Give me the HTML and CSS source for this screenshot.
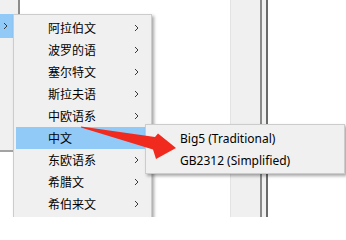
FILE: index.html
```html
<!DOCTYPE html>
<html lang="zh">
<head>
<meta charset="utf-8">
<title>Encoding menu</title>
<link rel="stylesheet" href="styles.css">
</head>
<body>
<div class="screen">
  <div class="bg">
    <div class="left-pane">
      <div class="pane-row active">
        <svg class="chev" viewBox="0 0 5 8" width="5" height="8"><polyline points="1,1 4,4 1,7"/></svg>
      </div>
    </div>
    <div class="pane-divider"></div>
    <div class="content"></div>
    <div class="scroll-track"></div>
    <div class="splitter"></div>
    <div class="content-right"></div>
  </div>

  <div class="menu main-menu">
    <div class="item"><span>阿拉伯文</span><svg class="chev" viewBox="0 0 5 8" width="5" height="8"><polyline points="1,1 4,4 1,7"/></svg></div>
    <div class="item"><span>波罗的语</span><svg class="chev" viewBox="0 0 5 8" width="5" height="8"><polyline points="1,1 4,4 1,7"/></svg></div>
    <div class="item"><span>塞尔特文</span><svg class="chev" viewBox="0 0 5 8" width="5" height="8"><polyline points="1,1 4,4 1,7"/></svg></div>
    <div class="item"><span>斯拉夫语</span><svg class="chev" viewBox="0 0 5 8" width="5" height="8"><polyline points="1,1 4,4 1,7"/></svg></div>
    <div class="item"><span>中欧语系</span><svg class="chev" viewBox="0 0 5 8" width="5" height="8"><polyline points="1,1 4,4 1,7"/></svg></div>
    <div class="item active"><span>中文</span><svg class="chev" viewBox="0 0 5 8" width="5" height="8"><polyline points="1,1 4,4 1,7"/></svg></div>
    <div class="item"><span>东欧语系</span><svg class="chev" viewBox="0 0 5 8" width="5" height="8"><polyline points="1,1 4,4 1,7"/></svg></div>
    <div class="item"><span>希腊文</span><svg class="chev" viewBox="0 0 5 8" width="5" height="8"><polyline points="1,1 4,4 1,7"/></svg></div>
    <div class="item"><span>希伯来文</span><svg class="chev" viewBox="0 0 5 8" width="5" height="8"><polyline points="1,1 4,4 1,7"/></svg></div>
  </div>

  <div class="menu sub-menu">
    <div class="item"><span>Big5 (Traditional)</span></div>
    <div class="item"><span>GB2312 (Simplified)</span></div>
  </div>

  <svg class="pointer-arrow" viewBox="0 0 346 217" width="346" height="217">
    <polygon points="81,126.5 155,137 158,133.5 176,148 156,159 153,149.5 81,127.5"/>
  </svg>
</div>
</body>
</html>
```

FILE: styles.css
```css
html, body {
  margin: 0;
  padding: 0;
  background: #ffffff;
}

.screen {
  position: relative;
  width: 346px;
  height: 217px;
  overflow: hidden;
  font-family: "Noto Sans", "Noto Sans CJK SC", sans-serif;
  font-size: 12px;
  color: #000000;
}

.bg {
  display: flex;
  height: 217px;
}

.left-pane {
  box-sizing: border-box;
  width: 18px;
  height: 152px;
  padding-top: 14px;
  background: #f0f0f0;
  border-bottom: 2px solid #a3a3a3;
  display: flex;
  flex-direction: column;
}

.pane-row {
  height: 24px;
  display: flex;
  align-items: center;
  padding-left: 3px;
}

.pane-row.active {
  background: #91c9f7;
}

.pane-divider {
  width: 2px;
  background: #8c8c8c;
}

.content {
  width: 210px;
  background: #ffffff;
}

.scroll-track {
  box-sizing: border-box;
  width: 30px;
  background: #f0f0f0;
  border-left: 1px solid #e3e3e3;
}

.splitter {
  box-sizing: border-box;
  width: 8px;
  background: #f0f0f0;
  border-left: 2px solid #8a8a8a;
  border-right: 2px solid #6a6a6a;
}

.content-right {
  flex: 1;
  background: #ffffff;
}

.chev {
  display: block;
  flex: none;
}

.chev polyline {
  fill: none;
  stroke: #3a3a3a;
  stroke-width: 1;
}

.menu {
  position: absolute;
  box-sizing: border-box;
  background: #f0f0f0;
  border: 1px solid #cccccc;
  padding: 2px;
  box-shadow: 2px 2px 3px rgba(0, 0, 0, 0.35);
  display: flex;
  flex-direction: column;
}

.main-menu {
  left: 13px;
  top: 14px;
  width: 139px;
  height: 230px;
}

.sub-menu {
  left: 145px;
  top: 124px;
  width: 200px;
}

.item {
  height: 22px;
  display: flex;
  align-items: center;
  justify-content: space-between;
  padding-left: 32px;
  padding-right: 10px;
  white-space: nowrap;
}

.item.active {
  background: #91c9f7;
}

.pointer-arrow {
  position: absolute;
  left: 0;
  top: 0;
  pointer-events: none;
}

.pointer-arrow polygon {
  fill: #f02a1e;
}
```
